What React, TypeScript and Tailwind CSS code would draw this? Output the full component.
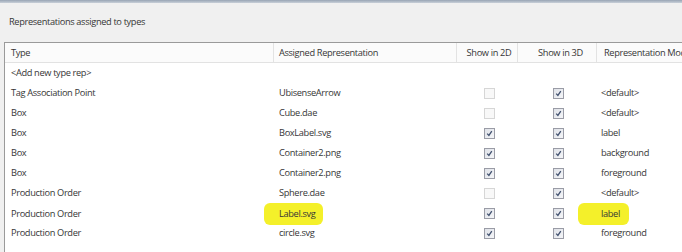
import React from "react";

type Row = {
  type: string;
  rep: string;
  d2: boolean | null;
  d3: boolean | null;
  mode: string;
  hlRep?: boolean;
  hlMode?: boolean;
};

const rows: Row[] = [
  { type: "<Add new type rep>", rep: "", d2: null, d3: null, mode: "" },
  { type: "Tag Association Point", rep: "UbisenseArrow", d2: false, d3: true, mode: "<default>" },
  { type: "Box", rep: "Cube.dae", d2: false, d3: true, mode: "<default>" },
  { type: "Box", rep: "BoxLabel.svg", d2: true, d3: true, mode: "label" },
  { type: "Box", rep: "Container2.png", d2: true, d3: true, mode: "background" },
  { type: "Box", rep: "Container2.png", d2: true, d3: true, mode: "foreground" },
  { type: "Production Order", rep: "Sphere.dae", d2: false, d3: true, mode: "<default>" },
  { type: "Production Order", rep: "Label.svg", d2: true, d3: true, mode: "label", hlRep: true, hlMode: true },
  { type: "Production Order", rep: "circle.svg", d2: true, d3: true, mode: "foreground" },
];

function Check({ on }: { on: boolean }) {
  if (!on) {
    return <div className="w-[11px] h-[11px] border border-[#d6d6d6] bg-[#f8f8f8]" />;
  }
  return (
    <div className="w-[11px] h-[11px] border border-[#9a9ca6] bg-gradient-to-br from-[#dfe2e8] to-[#f4f5f8] flex items-center justify-center">
      <svg width="7" height="7" viewBox="0 0 7 7">
        <path d="M1.2 3.6 L2.9 5.4 L5.8 1.2" fill="none" stroke="#40506e" strokeWidth="1.3" />
      </svg>
    </div>
  );
}

const grid = "grid grid-cols-[269px_183px_61px_79px_200px]";

export default function App() {
  return (
    <div
      className="w-[682px] h-[252px] bg-[#f0f0f0] overflow-hidden flex flex-col text-[9.25px] tracking-[-0.35px] text-[#363636]"
      style={{ fontFamily: '"Open Sans", "Noto Sans", sans-serif' }}
    >
      <div className="h-[3px] bg-gradient-to-b from-[#98a4b4] to-[#c9d0d9]" />
      <div className="h-[39px] flex items-center pl-[9px] pb-[1px]">Representations assigned to types</div>
      <div className="flex-1 ml-[4px] border-l border-t border-[#9a9a9a] bg-white">
        <div className={`${grid} h-[20px] bg-[#fbfbfb] border-b border-[#e2e2e2]`}>
          <div className="flex items-center pl-[6px] border-r border-[#e3e3e3]">Type</div>
          <div className="flex items-center pl-[5px] border-r border-[#e3e3e3]">Assigned Representation</div>
          <div className="flex items-center justify-center pl-[4px] border-r border-[#e3e3e3]">Show in 2D</div>
          <div className="flex items-center justify-center pl-[7px] border-r border-[#e3e3e3]">Show in 3D</div>
          <div className="flex items-center pl-[7px] whitespace-nowrap">Representation Mode</div>
        </div>
        {rows.map((r, i) => (
          <div key={i} className={`${grid} h-[20px]`}>
            <div className="flex items-center pl-[6px]">{r.type}</div>
            <div className="flex items-center pl-[5px]">
              {r.hlRep ? (
                <span className="bg-[#f4f02a] rounded-[6px] pl-[15px] w-[59px] py-[4px] -ml-[15px]">{r.rep}</span>
              ) : (
                r.rep
              )}
            </div>
            <div className="flex items-center justify-center pl-[4px]">{r.d2 !== null && <Check on={r.d2} />}</div>
            <div className="flex items-center justify-center pl-[2px]">{r.d3 !== null && <Check on={r.d3} />}</div>
            <div className="flex items-center pl-[4px]">
              {r.hlMode ? (
                <span className="bg-[#f4f02a] rounded-[6px] pl-[23px] w-[51px] py-[4px] -ml-[23px]">{r.mode}</span>
              ) : (
                r.mode
              )}
            </div>
          </div>
        ))}
      </div>
    </div>
  );
}
